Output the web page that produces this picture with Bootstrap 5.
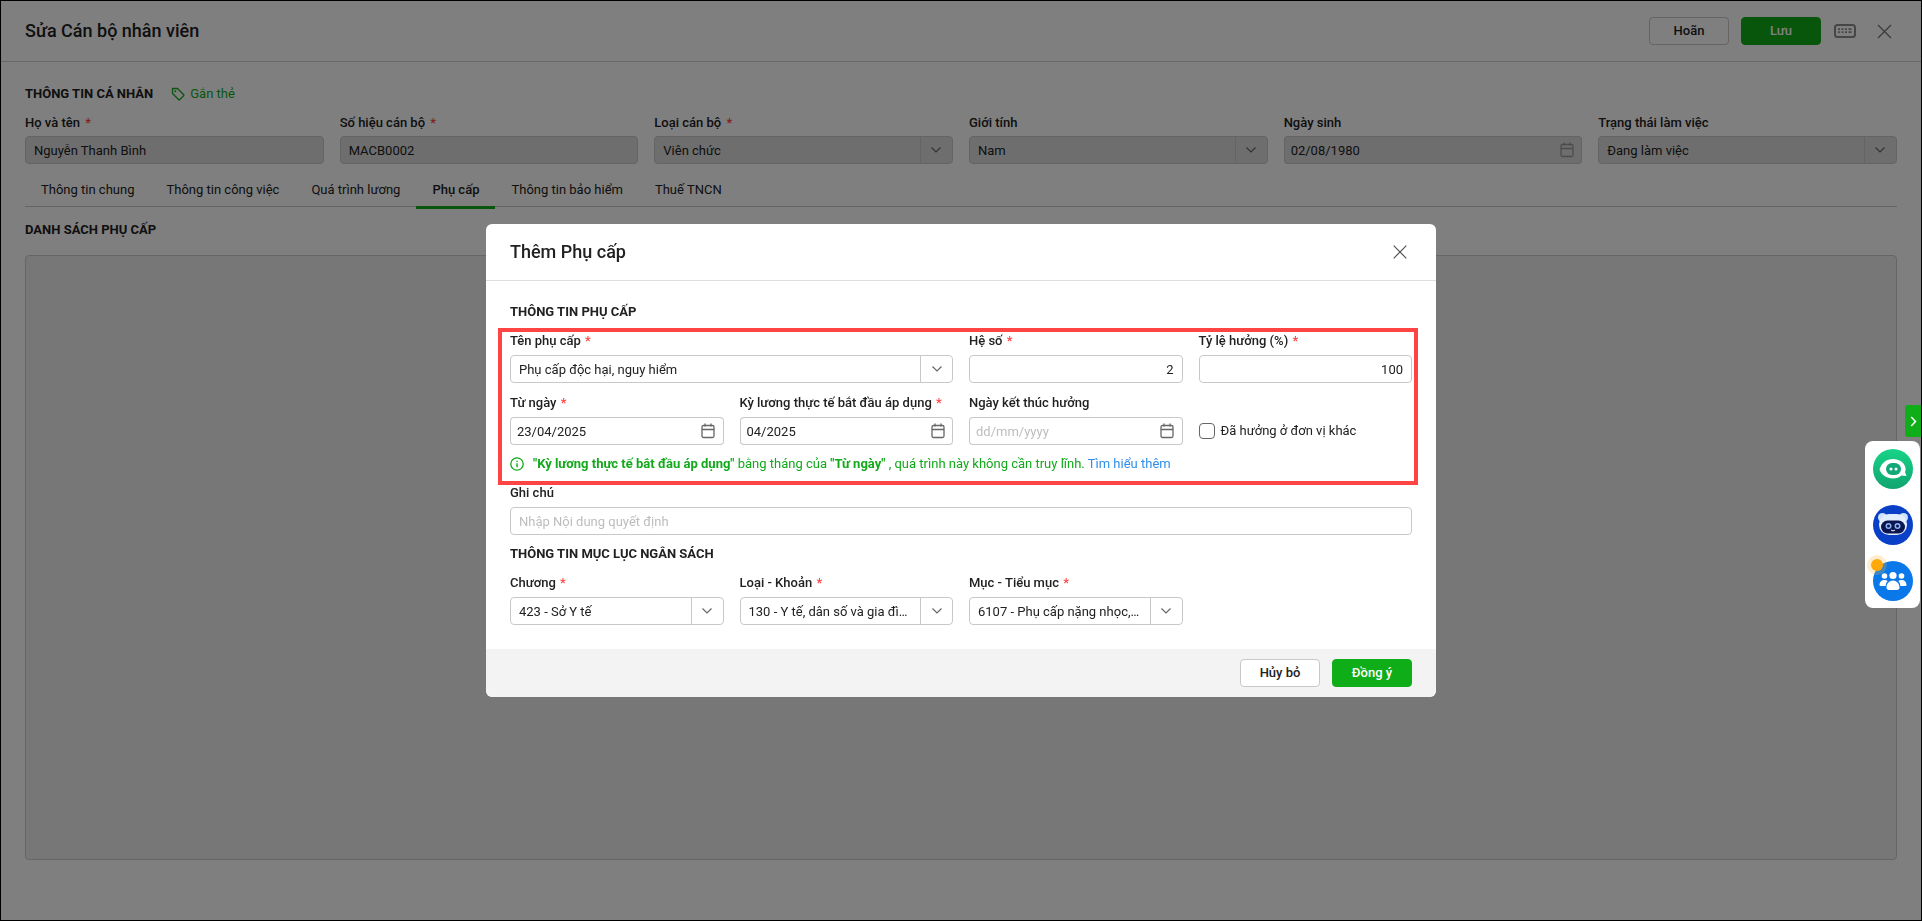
<!DOCTYPE html>
<html lang="vi">
<head>
<meta charset="utf-8">
<title>Sửa Cán bộ nhân viên</title>
<link href="https://cdn.jsdelivr.net/npm/bootstrap@5.3.0/dist/css/bootstrap.min.css" rel="stylesheet">
<style>
html,body{height:100%;overflow:hidden}
body{font-family:Roboto,"Liberation Sans",sans-serif;font-size:13px;line-height:18px;color:#212121;background:#fff}
.shell{height:921px;border:1px solid #000;display:flex;flex-direction:column}
.top-bar{height:61px;border-bottom:1px solid #d0d0d0;padding:0 29px 0 24px;flex:none}
.page-title{font-size:18px;line-height:24px;font-weight:500;margin:0}
.act-btn{width:80px;height:28px;padding:0;font-size:13px;font-weight:500;line-height:26px;border-radius:4px}
.btn-ghost{background:#fff;border:1px solid #c8c8c8;color:#212121}
.btn-ok{background:#0fad18;border:1px solid #0fad18;color:#fff}
.save-btn{margin:0 13px 0 12px}
.kbd-ico{flex:none}
.close-ico{margin-left:21px}
.page-main{padding:23px 24px 0 24px;flex:1;display:flex;flex-direction:column;min-height:0}
.sect-title{font-size:13px;line-height:18px;font-weight:700;color:#212121;margin:0;text-transform:uppercase}
.tag-ico{margin-left:18px}
.tag-link{color:#0fad18;font-weight:400;margin-left:5px}
.fld-label{display:block;line-height:18px;font-weight:500;margin-bottom:5px;color:#212121;white-space:nowrap}
.req{color:#f44;margin-left:1px}
.top-fields{margin-top:11px}
.top-fields .req{margin-left:2px}
.top-fields .fld-label{margin-bottom:4px}
.form-control.fx,.fx-group .form-control{height:28px;min-height:28px;padding:0 8px;font-size:13px;line-height:26px;color:#212121;border:1px solid #c8c8c8;border-radius:4px;text-overflow:ellipsis;box-shadow:none}
.fx-group{height:28px}
.fx-group .input-group-text{padding:0;justify-content:center;background:#fff;border:1px solid #c8c8c8;border-radius:4px;height:28px;color:#666}
.fx-group .chev-box{width:33px}
.fx-group .cal-box{width:30px;border-left:0}
.fx-group .form-control.cal-input{border-right:0;padding-left:6px}
.fx-group.locked .form-control,.fx-group.locked .input-group-text,.form-control.fx.locked{background:#dcdcdc;border-color:#c8c8c8}
.form-control::placeholder{color:#bdbdbd}
.tab-strip{margin-top:10px;border-bottom:1px solid #c8c8c8;height:33px;flex:none}
.tab-strip .nav-link{padding:7px 16px 0;color:#212121;font-size:13px;line-height:18px;border-bottom:3px solid transparent;box-sizing:content-box;height:25px}
.tab-strip .nav-link.active{border-bottom-color:#0fad18;font-weight:500}
.list-title{margin-top:14px}
.list-box{margin-top:16px;height:605px;background:#eee;border:1px solid #ccc;border-radius:4px;flex:none}
.dlg{width:950px;max-width:none;margin:224px 0 0 486px}
.dlg .modal-content{border:0;border-radius:6px;height:473px;overflow:hidden;display:flex;flex-direction:column}
.dlg .modal-header{height:57px;padding:0 29px 0 24px;border-bottom:1px solid #dedede;flex:none}
.dlg .modal-title{font-size:18px;line-height:24px;font-weight:500;color:#212121}
.dlg .modal-body{padding:22px 24px 0;flex:1}
.dlg .modal-footer{height:48px;padding:0 24px;gap:12px;background:#f3f3f3;border:0;flex:none;justify-content:flex-end}
.dlg .modal-footer>*{margin:0}
.callout{border:4px solid #ff4444;margin:7px -6px 0 -12px;padding:0 2px 8px 8px}
.row-gap-11{margin-top:11px}
.hint{margin-top:10px;color:#12a91b;display:flex;align-items:center;gap:9px;white-space:nowrap}
.hint a{color:#2f8fea;text-decoration:none}
.note-wrap{margin-top:-1px}
.budget-title{margin-top:10px}
.budget-row{margin-top:11px}
.chk{min-height:0;margin:0;padding-left:22px;height:28px;display:flex;align-items:center}
.chk .form-check-input{width:16px;height:16px;margin:0 6px 0 -22px;border:1px solid #666;border-radius:4px;float:none;flex:none}
.chk .form-check-label{font-weight:400}
.dock-tab{position:fixed;left:1905px;top:405px;width:16px;height:32px;background:#0fad18;border-radius:3px 0 0 3px;z-index:1060;display:flex;align-items:center;justify-content:center}
.dock{position:fixed;left:1865px;top:441px;width:55px;height:167px;background:#fff;border-radius:8px;z-index:1060;padding:8px 0 7px 8px;display:flex;flex-direction:column;gap:16px}
.dock-dot{position:absolute;left:2px;top:114px}
</style>
</head>
<body>
<div class="shell">
  <header class="top-bar d-flex align-items-center justify-content-between">
    <h1 class="page-title">Sửa Cán bộ nhân viên</h1>
    <div class="d-flex align-items-center">
      <button type="button" class="btn act-btn btn-ghost">Hoãn</button>
      <button type="button" class="btn act-btn btn-ok save-btn">Lưu</button>
      <svg class="kbd-ico" width="22" height="14" viewBox="0 0 22 14" fill="none"><rect x="1" y="1" width="20" height="12" rx="2.500" stroke="#8c8c8c" stroke-width="2"/><path d="M4 5.200h2M7.500 5.200h2M11 5.200h2M14.500 5.200h3M4 8.200h2M7.500 8.200h2M11 8.200h2M14.500 8.200h3" stroke="#8c8c8c" stroke-width="1.800"/></svg>
      <svg class="close-ico" width="15" height="15" viewBox="0 0 15 15" fill="none"><path d="M1 1l13 13M14 1L1 14" stroke="#777" stroke-width="1.300"/></svg>
    </div>
  </header>
  <main class="page-main">
    <div class="d-flex align-items-center">
      <h2 class="sect-title">Thông tin cá nhân</h2>
      <svg class="tag-ico" width="14" height="14" viewBox="0 0 14 14" fill="none"><path d="M1.500 1.500h5l6 6a1 1 0 0 1 0 1.400l-3.600 3.600a1 1 0 0 1-1.400 0l-6-6z" stroke="#0fad18" stroke-width="1.300" stroke-linejoin="round"/><circle cx="4.300" cy="4.300" r="1" fill="#0fad18"/></svg>
      <span class="tag-link">Gắn thẻ</span>
    </div>
    <div class="row gx-3 top-fields">
      <div class="col-2"><label class="fld-label">Họ và tên <span class="req">*</span></label><input class="form-control fx locked" value="Nguyễn Thanh Bình" disabled></div>
      <div class="col-2"><label class="fld-label">Số hiệu cán bộ <span class="req">*</span></label><input class="form-control fx locked" value="MACB0002" disabled></div>
      <div class="col-2"><label class="fld-label">Loại cán bộ <span class="req">*</span></label><div class="input-group fx-group locked"><input class="form-control" value="Viên chức" disabled><span class="input-group-text chev-box"><svg width="12" height="8" viewBox="0 0 12 8" fill="none"><path d="M1.500 1.500L6 6l4.500-4.500" stroke="#666" stroke-width="1.200"/></svg></span></div></div>
      <div class="col-2"><label class="fld-label">Giới tính</label><div class="input-group fx-group locked"><input class="form-control" value="Nam" disabled><span class="input-group-text chev-box"><svg width="12" height="8" viewBox="0 0 12 8" fill="none"><path d="M1.500 1.500L6 6l4.500-4.500" stroke="#666" stroke-width="1.200"/></svg></span></div></div>
      <div class="col-2"><label class="fld-label">Ngày sinh</label><div class="input-group fx-group locked"><input class="form-control cal-input" value="02/08/1980" disabled><span class="input-group-text cal-box"><svg width="14" height="16" viewBox="0 0 14 16" fill="none"><rect x="1" y="2.500" width="12" height="12" rx="1.500" stroke="#999" stroke-width="1.300"/><path d="M1 6.500h12M4 .5v3M10 .5v3" stroke="#999" stroke-width="1.300"/></svg></span></div></div>
      <div class="col-2"><label class="fld-label">Trạng thái làm việc</label><div class="input-group fx-group locked"><input class="form-control" value="Đang làm việc" disabled><span class="input-group-text chev-box"><svg width="12" height="8" viewBox="0 0 12 8" fill="none"><path d="M1.500 1.500L6 6l4.500-4.500" stroke="#666" stroke-width="1.200"/></svg></span></div></div>
    </div>
    <nav class="nav tab-strip">
      <a class="nav-link" href="#">Thông tin chung</a>
      <a class="nav-link" href="#">Thông tin công việc</a>
      <a class="nav-link" href="#">Quá trình lương</a>
      <a class="nav-link active" href="#">Phụ cấp</a>
      <a class="nav-link" href="#">Thông tin bảo hiểm</a>
      <a class="nav-link" href="#">Thuế TNCN</a>
    </nav>
    <h2 class="sect-title list-title">Danh sách phụ cấp</h2>
    <div class="list-box"></div>
  </main>
</div>

<div class="modal-backdrop show"></div>

<div class="modal d-block" tabindex="-1">
  <div class="modal-dialog dlg">
    <div class="modal-content">
      <div class="modal-header">
        <h5 class="modal-title">Thêm Phụ cấp</h5>
        <svg width="14" height="14" viewBox="0 0 14 14" fill="none"><path d="M.7.7l12.600 12.600M13.300.7L.7 13.300" stroke="#555" stroke-width="1.200"/></svg>
      </div>
      <div class="modal-body">
        <h6 class="sect-title">Thông tin phụ cấp</h6>
        <div class="callout">
          <div class="row gx-3">
            <div class="col-6"><label class="fld-label">Tên phụ cấp <span class="req">*</span></label><div class="input-group fx-group"><input class="form-control" value="Phụ cấp độc hại, nguy hiểm"><span class="input-group-text chev-box"><svg width="12" height="8" viewBox="0 0 12 8" fill="none"><path d="M1.500 1.500L6 6l4.500-4.500" stroke="#666" stroke-width="1.200"/></svg></span></div></div>
            <div class="col-3"><label class="fld-label">Hệ số <span class="req">*</span></label><input class="form-control fx text-end" value="2"></div>
            <div class="col-3"><label class="fld-label">Tỷ lệ hưởng (%) <span class="req">*</span></label><input class="form-control fx text-end" value="100"></div>
          </div>
          <div class="row gx-3 row-gap-11">
            <div class="col-3"><label class="fld-label">Từ ngày <span class="req">*</span></label><div class="input-group fx-group"><input class="form-control cal-input" value="23/04/2025"><span class="input-group-text cal-box"><svg width="14" height="16" viewBox="0 0 14 16" fill="none"><rect x="1" y="2.500" width="12" height="12" rx="1.500" stroke="#666" stroke-width="1.300"/><path d="M1 6.500h12M4 .5v3M10 .5v3" stroke="#666" stroke-width="1.300"/></svg></span></div></div>
            <div class="col-3"><label class="fld-label">Kỳ lương thực tế bắt đầu áp dụng <span class="req">*</span></label><div class="input-group fx-group"><input class="form-control cal-input" value="04/2025"><span class="input-group-text cal-box"><svg width="14" height="16" viewBox="0 0 14 16" fill="none"><rect x="1" y="2.500" width="12" height="12" rx="1.500" stroke="#666" stroke-width="1.300"/><path d="M1 6.500h12M4 .5v3M10 .5v3" stroke="#666" stroke-width="1.300"/></svg></span></div></div>
            <div class="col-3"><label class="fld-label">Ngày kết thúc hưởng</label><div class="input-group fx-group"><input class="form-control cal-input" placeholder="dd/mm/yyyy"><span class="input-group-text cal-box"><svg width="14" height="16" viewBox="0 0 14 16" fill="none"><rect x="1" y="2.500" width="12" height="12" rx="1.500" stroke="#666" stroke-width="1.300"/><path d="M1 6.500h12M4 .5v3M10 .5v3" stroke="#666" stroke-width="1.300"/></svg></span></div></div>
            <div class="col-3 d-flex align-items-end"><div class="form-check chk"><input class="form-check-input" type="checkbox" id="chk1"><label class="form-check-label" for="chk1">Đã hưởng ở đơn vị khác</label></div></div>
          </div>
          <div class="hint">
            <svg width="14" height="14" viewBox="0 0 14 14" fill="none"><circle cx="7" cy="7" r="6.200" stroke="#12a91b" stroke-width="1.300"/><path d="M7 6.200v4M7 3.800v1.200" stroke="#12a91b" stroke-width="1.400"/></svg>
            <span><b>"Kỳ lương thực tế bắt đầu áp dụng"</b> bằng tháng của <b>"Từ ngày"</b> , quá trình này không cần truy lĩnh. <a href="#">Tìm hiểu thêm</a></span>
          </div>
        </div>
        <div class="note-wrap"><label class="fld-label">Ghi chú</label><input class="form-control fx" placeholder="Nhập Nội dung quyết định"></div>
        <h6 class="sect-title budget-title">Thông tin mục lục ngân sách</h6>
        <div class="row gx-3 budget-row">
          <div class="col-3"><label class="fld-label">Chương <span class="req">*</span></label><div class="input-group fx-group"><input class="form-control" value="423 - Sở Y tế"><span class="input-group-text chev-box"><svg width="12" height="8" viewBox="0 0 12 8" fill="none"><path d="M1.500 1.500L6 6l4.500-4.500" stroke="#666" stroke-width="1.200"/></svg></span></div></div>
          <div class="col-3"><label class="fld-label">Loại - Khoản <span class="req">*</span></label><div class="input-group fx-group"><input class="form-control" value="130 - Y tế, dân số và gia đình"><span class="input-group-text chev-box"><svg width="12" height="8" viewBox="0 0 12 8" fill="none"><path d="M1.500 1.500L6 6l4.500-4.500" stroke="#666" stroke-width="1.200"/></svg></span></div></div>
          <div class="col-3"><label class="fld-label">Mục - Tiểu mục <span class="req">*</span></label><div class="input-group fx-group"><input class="form-control" value="6107 - Phụ cấp nặng nhọc, độc hại"><span class="input-group-text chev-box"><svg width="12" height="8" viewBox="0 0 12 8" fill="none"><path d="M1.500 1.500L6 6l4.500-4.500" stroke="#666" stroke-width="1.200"/></svg></span></div></div>
        </div>
      </div>
      <div class="modal-footer">
        <button type="button" class="btn act-btn btn-ghost">Hủy bỏ</button>
        <button type="button" class="btn act-btn btn-ok">Đồng ý</button>
      </div>
    </div>
  </div>
</div>

<div class="dock-tab"><svg width="7" height="11" viewBox="0 0 7 11" fill="none"><path d="M1.200 1l4.300 4.500L1.200 10" stroke="#fff" stroke-width="1.500"/></svg></div>
<div class="dock">
  <svg width="40" height="40" viewBox="0 0 40 40"><defs><linearGradient id="g1" x1="0" y1="0" x2="0" y2="1"><stop offset="0" stop-color="#17d487"/><stop offset="1" stop-color="#10a470"/></linearGradient></defs><circle cx="20" cy="20" r="20" fill="url(#g1)"/><path d="M6.500 20.500c2-6.500 7-10.500 13.500-10.500s11.500 3.500 12.500 9c.3 1.500 0 3-.5 4l1.500 4-5-.5c-2.200 2-5 3-8.500 3-6.500 0-11.500-3.500-13.500-9z" fill="#fff"/><rect x="13" y="14" width="15" height="12" rx="6" fill="#12a878"/><circle cx="18" cy="20" r="1.500" fill="#fff"/><circle cx="23" cy="20" r="1.500" fill="#fff"/></svg>
  <svg width="40" height="40" viewBox="0 0 40 40"><circle cx="20" cy="20" r="20" fill="#0a3fc8"/><circle cx="9.500" cy="12.500" r="4.500" fill="#cfe2fb"/><circle cx="30.500" cy="12.500" r="4.500" fill="#cfe2fb"/><rect x="6" y="9" width="28" height="21" rx="10" fill="#e3eefd"/><rect x="8" y="15.500" width="24" height="13" rx="6.500" fill="#0b1650"/><circle cx="15.500" cy="21" r="3" fill="#8fb4f2"/><circle cx="24.500" cy="21" r="3" fill="#8fb4f2"/><circle cx="15.500" cy="21" r="1.500" fill="#0b1650"/><circle cx="24.500" cy="21" r="1.500" fill="#0b1650"/><path d="M18 25q2 2 4 0" stroke="#fff" stroke-width="1" fill="none"/></svg>
  <svg width="40" height="40" viewBox="0 0 40 40"><circle cx="20" cy="20" r="20" fill="#0a78e8"/><g fill="#fff"><circle cx="20" cy="14.500" r="3.600"/><circle cx="11.500" cy="15" r="2.800"/><circle cx="28.500" cy="15" r="2.800"/><path d="M6.500 24c0-3 2-5 5-5 1.300 0 2.400.3 3.200 1-1.300 1.300-2 3-2 5H8c-1 0-1.500-.4-1.500-1zM33.500 24c0-3-2-5-5-5-1.300 0-2.400.3-3.200 1 1.300 1.300 2 3 2 5H32c1 0 1.500-.4 1.500-1zM13.500 26.500c0-4 3-7 6.500-7s6.500 3 6.500 7c0 1.500-1 2.500-2.500 2.500h-8c-1.500 0-2.500-1-2.500-2.500z"/></g></svg>
  <svg class="dock-dot" width="20" height="20" viewBox="0 0 20 20"><circle cx="10" cy="10" r="10" fill="#fcb83a" fill-opacity=".25"/><circle cx="10" cy="10" r="6" fill="#ffa908"/></svg>
</div>
<script src="https://cdn.jsdelivr.net/npm/bootstrap@5.3.0/dist/js/bootstrap.bundle.min.js"></script>
</body>
</html>
